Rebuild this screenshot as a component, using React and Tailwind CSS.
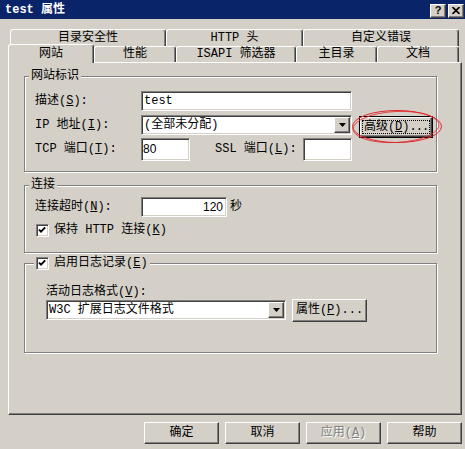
import React from 'react';

const RAISED = 'bg-[#D4D0C8] border border-t-white border-l-white border-r-[#404040] border-b-[#404040] shadow-[inset_-1px_-1px_0_#808080]';
const SUNKEN = 'bg-white border border-t-[#808080] border-l-[#808080] border-r-white border-b-white shadow-[inset_1px_1px_0_#404040,inset_-1px_-1px_0_#D4D0C8]';
const ETCHED = 'border border-[#808080] shadow-[inset_1px_1px_0_#fff,1px_1px_0_#fff]';

function Tab({ className, selected, children }) {
  return (
    <div
      className={`${className} ${selected ? 'h-[19px] -mb-px relative z-10' : ''} flex shrink-0 items-center justify-center bg-[#D4D0C8] border-t border-l border-r border-t-white border-l-white border-r-[#404040] rounded-t-[3px] shadow-[inset_-1px_0_0_#808080] leading-[13px]`}
    >
      {children}
    </div>
  );
}

function Button({ className, disabled, children }) {
  return (
    <div
      className={`${RAISED} ${className} flex shrink-0 items-center justify-center leading-[13px] whitespace-nowrap ${disabled ? 'text-[#808080] [text-shadow:1px_1px_0_#fff]' : ''}`}
    >
      {children}
    </div>
  );
}

function Arrow() {
  return (
    <svg width="7" height="4" viewBox="0 0 7 4">
      <polygon points="0,0 7,0 3.5,4" fill="#000" />
    </svg>
  );
}

function Select({ className, children }) {
  return (
    <div className={`${SUNKEN} ${className} flex p-[1px]`}>
      <div className="flex-1 flex items-center pl-[1px] leading-[13px] whitespace-nowrap overflow-hidden">{children}</div>
      <div className={`${RAISED} w-[16px] flex items-center justify-center`}>
        <Arrow />
      </div>
    </div>
  );
}

function Check() {
  return (
    <div className={`${SUNKEN} w-[13px] h-[13px] shrink-0 flex items-center justify-center`}>
      <svg width="11" height="11" viewBox="0 0 11 11">
        <polyline points="2,4.6 4,6.6 8.2,2.4" fill="none" stroke="#000" strokeWidth="1.9" />
      </svg>
    </div>
  );
}

export default function App() {
  return (
    <div className="w-[465px] h-[449px] overflow-hidden bg-[#D4D0C8] text-[12px] text-black font-['Liberation_Mono','Noto_Sans_CJK_SC',monospace] select-none">
      {/* title bar */}
      <div className="h-[19px] bg-[#0A246A] flex items-center justify-between pl-[5px] pr-[1px]">
        <span className="text-white font-bold leading-[13px] mt-[1px]">test 属性</span>
        <div className="flex gap-[2px] mt-[2px]">
          <div className={`${RAISED} w-[16px] h-[14px] flex items-center justify-center font-['Liberation_Sans',sans-serif] font-bold text-[11px] leading-[11px]`}>?</div>
          <div className={`${RAISED} w-[16px] h-[14px] flex items-center justify-center`}>
            <svg width="8" height="7" viewBox="0 0 8 7">
              <path d="M0.5 0 L7.5 7 M7.5 0 L0.5 7" stroke="#000" strokeWidth="1.6" />
            </svg>
          </div>
        </div>
      </div>

      {/* tabs */}
      <div className="mt-[10px] ml-[10px] flex h-[17px]">
        <Tab className="w-[156px] h-[17px]">目录安全性</Tab>
        <Tab className="w-[137px] h-[17px]">HTTP 头</Tab>
        <Tab className="w-[156px] h-[17px]">自定义错误</Tab>
      </div>
      <div className="-mt-[2px] ml-[8px] flex items-end h-[18px] relative">
        <Tab className="w-[86px]" selected>网站</Tab>
        <Tab className="w-[82px] h-[16px]">性能</Tab>
        <Tab className="w-[120px] h-[16px]">ISAPI 筛选器</Tab>
        <Tab className="w-[81px] h-[16px]">主目录</Tab>
        <Tab className="w-[82px] h-[16px]">文档</Tab>
      </div>

      {/* panel */}
      <div className="ml-[8px] w-[454px] h-[353px] border border-t-white border-l-white border-r-[#404040] border-b-[#404040] shadow-[inset_-1px_-1px_0_#808080] pt-[13px] pl-[15px]">
        {/* 网站标识 */}
        <div className={`${ETCHED} w-[413px] h-[96px]`}>
          <div className="-mt-[7px] ml-[4px] w-fit px-[2px] h-[13px] leading-[13px] bg-[#D4D0C8]">网站标识</div>
          <div className="mt-[8px] pl-[10px] flex flex-col">
            <div className="flex items-center h-[20px]">
              <span className="w-[106px] leading-[13px]">描述(<u>S</u>):</span>
              <div className={`${SUNKEN} w-[211px] h-[20px] flex items-center pl-[2px] leading-[13px]`}>test</div>
            </div>
            <div className="flex items-start h-[23px] mt-[4px]">
              <span className="w-[106px] h-[20px] flex items-center leading-[13px]">IP 地址(<u>I</u>):</span>
              <Select className="w-[211px] h-[20px]">(全部未分配)</Select>
              <div className="relative ml-[7px] mt-[1px]">
                <div className="w-[74px] h-[22px] border border-black">
                  <Button className="w-full h-full">
                    <span className="border border-dotted border-black px-[1px] h-[14px] flex items-center whitespace-nowrap">
                      高级(<u>D</u>)<span className="tracking-[-1px]">...</span>
                    </span>
                  </Button>
                </div>
                <svg className="absolute -left-[8px] -top-[7px] pointer-events-none overflow-visible" width="92" height="35" viewBox="0 0 92 35">
                  <ellipse cx="46" cy="17.5" rx="44.5" ry="16" fill="none" stroke="#E0262A" strokeWidth="1" />
                  <ellipse cx="45" cy="18" rx="43" ry="15.5" fill="none" stroke="#E0262A" strokeWidth="0.8" transform="rotate(-3 45 18)" />
                </svg>
              </div>
            </div>
            <div className="flex items-center h-[23px]">
              <span className="w-[106px] leading-[13px]">TCP 端口(<u>T</u>):</span>
              <div className={`${SUNKEN} w-[49px] h-[23px] flex items-center pl-[1px] leading-[13px] font-['Liberation_Sans',sans-serif]`}>80</div>
              <span className="ml-[25px] w-[88px] leading-[13px]">SSL 端口(<u>L</u>):</span>
              <div className={`${SUNKEN} w-[49px] h-[23px]`} />
            </div>
          </div>
        </div>

        {/* 连接 */}
        <div className={`${ETCHED} w-[413px] h-[68px] mt-[13px]`}>
          <div className="-mt-[7px] ml-[4px] w-fit px-[2px] h-[13px] leading-[13px] bg-[#D4D0C8]">连接</div>
          <div className="mt-[5px] pl-[10px] flex items-center h-[20px]">
            <span className="w-[106px] leading-[13px]">连接超时(<u>N</u>):</span>
            <div className={`${SUNKEN} w-[86px] h-[20px] flex items-center justify-end pr-[3px] leading-[13px] font-['Liberation_Sans',sans-serif]`}>120</div>
            <span className="ml-[3px] leading-[13px]">秒</span>
          </div>
          <div className="mt-[7px] pl-[11px] flex items-center h-[13px]">
            <Check />
            <span className="ml-[5px] leading-[13px]">保持 HTTP 连接(<u>K</u>)</span>
          </div>
        </div>

        {/* 日志 */}
        <div className={`${ETCHED} w-[413px] h-[90px] mt-[10px]`}>
          <div className="-mt-[7px] ml-[9px] w-fit px-[2px] h-[13px] flex items-center bg-[#D4D0C8]">
            <Check />
            <span className="ml-[5px] leading-[13px]">启用日志记录(<u>E</u>)</span>
          </div>
          <div className="mt-[16px] pl-[21px] h-[13px] leading-[13px]">活动日志格式(<u>V</u>):</div>
          <div className="pl-[21px] flex items-start h-[23px]">
            <Select className="w-[240px] h-[20px] mt-[1px]">W3C 扩展日志文件格式</Select>
            <Button className="ml-[6px] w-[75px] h-[23px]">属性(<u>P</u>)...</Button>
          </div>
        </div>
      </div>

      {/* dialog buttons */}
      <div className="mt-[7px] pr-[3px] flex justify-end gap-[6px]">
        <Button className="w-[75px] h-[22px]">确定</Button>
        <Button className="w-[75px] h-[22px]">取消</Button>
        <Button className="w-[75px] h-[22px]" disabled>应用(<u>A</u>)</Button>
        <Button className="w-[75px] h-[22px]">帮助</Button>
      </div>
    </div>
  );
}
